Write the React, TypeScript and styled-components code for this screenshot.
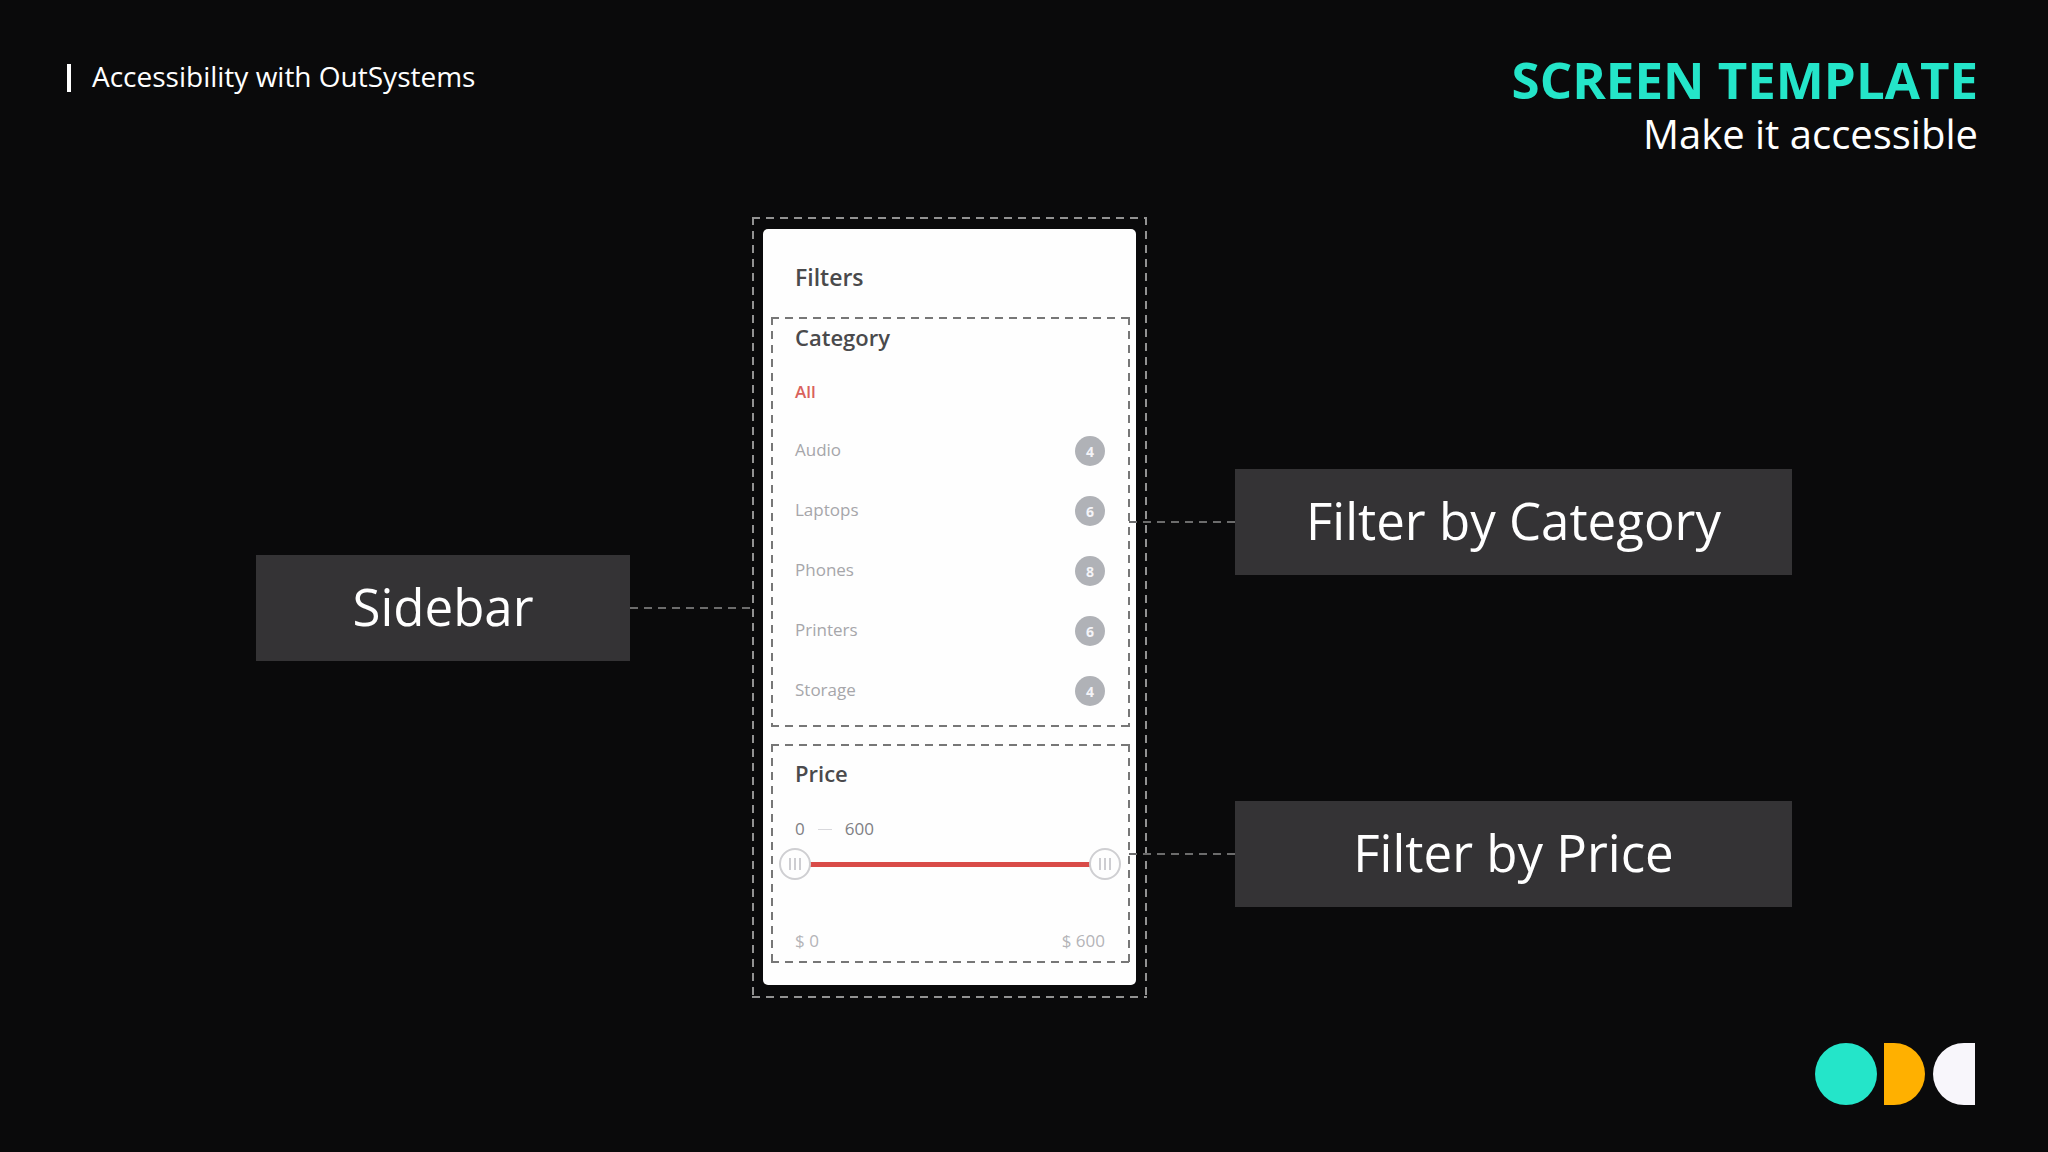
import React, { useState } from "react";
import styled, { createGlobalStyle, css } from "styled-components";

const GlobalStyle = createGlobalStyle`
  *, *::before, *::after { box-sizing: border-box; }
  body {
    margin: 0;
    background: #0a0a0b;
    color: #fff;
    font-family: "Open Sans", "Noto Sans", sans-serif;
  }
  h1, h2, h3, p, ul { margin: 0; padding: 0; }
`;

/* Long dashes along all four edges of a box. */
const dashedOutline = (color: string) => css`
  --dx: repeating-linear-gradient(90deg, ${color} 0 8px, transparent 8px 14px);
  --dy: repeating-linear-gradient(180deg, ${color} 0 8px, transparent 8px 14px);
  background-image: var(--dx), var(--dx), var(--dy), var(--dy);
  background-position: left top, left bottom, left top, right top;
  background-size: 100% 2px, 100% 2px, 2px 100%, 2px 100%;
  background-repeat: no-repeat;
`;

const Slide = styled.div`
  display: flex;
  flex-direction: column;
  min-height: 100vh;
`;

const Header = styled.header`
  display: flex;
  justify-content: space-between;
  align-items: flex-start;
  padding: 51px 70px 0 67px;
`;

const Brand = styled.p`
  display: flex;
  align-items: flex-end;
  gap: 21px;
  padding-top: 9px;
  font-size: 28px;
  line-height: 32px;

  &::before {
    content: "";
    width: 4px;
    height: 28px;
    background: #fff;
  }
`;

const Heading = styled.div`
  text-align: right;
`;

const Title = styled.h1`
  color: #24e5c9;
  font-size: 51px;
  font-weight: 700;
  line-height: 56px;
`;

const Subtitle = styled.p`
  font-size: 40px;
  line-height: 54px;
`;

const Diagram = styled.main`
  display: grid;
  grid-template-columns: 374fr 122fr 395px 88fr 557fr;
  margin-top: 56px;
  padding: 0 12.5%;
`;

const Label = styled.div`
  display: flex;
  align-items: center;
  justify-content: center;
  align-self: center;
  height: 106px;
  padding-bottom: 4px;
  background: #343335;
  font-size: 51px;
  line-height: 72px;
  white-space: nowrap;
`;

const Connector = styled.div<{ $reach?: number }>`
  align-self: center;
  height: 2px;
  margin-left: ${(p) => -(p.$reach ?? 0)}px;
  background: repeating-linear-gradient(90deg, #6c6c6c 0 8px, transparent 8px 14px);
  z-index: 1;
`;

const Callouts = styled.div`
  grid-column: span 2;
  display: grid;
  grid-template-columns: 88fr 557fr;
  grid-template-rows: 410px 219px;
  row-gap: 17px;
  padding-top: 100px;
`;

const Frame = styled.div`
  ${dashedOutline("#929292")}
  padding: 12px 11px 13px;
`;

const Card = styled.aside`
  padding: 0 6px 22px 8px;
  border-radius: 5px;
  background: #fefefe;
  color: #4a4a4c;
`;

const CardTitle = styled.h2`
  padding: 32px 24px 24px;
  font-size: 23px;
  font-weight: 600;
  line-height: 32px;
`;

const Group = styled.section<{ $top: number; $bottom: number }>`
  ${dashedOutline("#777")}
  padding: ${(p) => p.$top}px 25px ${(p) => p.$bottom}px 24px;

  & + & { margin-top: 17px; }
`;

const GroupTitle = styled.h3`
  font-size: 22px;
  font-weight: 600;
  line-height: 32px;
`;

const CategoryList = styled.ul`
  margin-top: 10px;
  list-style: none;
`;

const CategoryLink = styled.a<{ $active?: boolean }>`
  display: flex;
  align-items: center;
  justify-content: space-between;
  height: ${(p) => (p.$active ? 56 : 60)}px;
  color: ${(p) => (p.$active ? "#d9625c" : "#a6a6aa")};
  font-size: 17px;
  font-weight: ${(p) => (p.$active ? 600 : 400)};
  text-decoration: none;
`;

const Badge = styled.span`
  display: grid;
  place-items: center;
  width: 30px;
  height: 30px;
  margin-top: 4px;
  border-radius: 50%;
  background: #b0b2b7;
  color: #f4f4f8;
  font-size: 14px;
  font-weight: 700;
`;

const Values = styled.div`
  display: flex;
  align-items: center;
  gap: 13px;
  margin-top: 28px;
  color: #808084;
  font-size: 17px;
  line-height: 24px;
`;

const ValueDash = styled.span`
  width: 14px;
  height: 1px;
  background: #d8d8dc;
`;

const Range = styled.div`
  position: relative;
  height: 32px;
  margin: 7px -16px 0;

  &::before {
    content: "";
    position: absolute;
    inset: 14px 16px 13px;
    background: #d94b48;
  }
`;

const grip = "linear-gradient(#cdcdd1, #cdcdd1)";

const Slider = styled.input`
  position: absolute;
  inset: 0;
  width: 100%;
  height: 32px;
  margin: 0;
  appearance: none;
  background: none;
  pointer-events: none;

  &::-webkit-slider-thumb {
    appearance: none;
    width: 32px;
    height: 32px;
    border: 2px solid #cfcfd2;
    border-radius: 50%;
    background: ${grip} 8px 8px / 2px 12px no-repeat, ${grip} 13px 8px / 2px 12px no-repeat,
      ${grip} 18px 8px / 2px 12px no-repeat, #fefefe;
    pointer-events: auto;
  }
`;

const Limits = styled.div`
  display: flex;
  justify-content: space-between;
  margin-top: 49px;
  color: #b4b4b8;
  font-size: 17px;
  line-height: 24px;
`;

const Footer = styled.footer`
  display: flex;
  justify-content: flex-end;
  margin-top: auto;
  padding: 0 73px 47px;

  svg { display: block; }
`;

const categories = [
  { name: "Audio", count: 4 },
  { name: "Laptops", count: 6 },
  { name: "Phones", count: 8 },
  { name: "Printers", count: 6 },
  { name: "Storage", count: 4 },
];

const LIMIT = 600;

function PriceFilter() {
  const [low, setLow] = useState(0);
  const [high, setHigh] = useState(LIMIT);

  return (
    <Group $top={13} $bottom={10}>
      <GroupTitle>Price</GroupTitle>
      <Values>
        <span>{low}</span>
        <ValueDash />
        <span>{high}</span>
      </Values>
      <Range>
        <Slider
          type="range"
          aria-label="Minimum price"
          min={0}
          max={LIMIT}
          value={low}
          onChange={(e) => setLow(Math.min(Number(e.target.value), high))}
        />
        <Slider
          type="range"
          aria-label="Maximum price"
          min={0}
          max={LIMIT}
          value={high}
          onChange={(e) => setHigh(Math.max(Number(e.target.value), low))}
        />
      </Range>
      <Limits>
        <span>$ 0</span>
        <span>$ {LIMIT}</span>
      </Limits>
    </Group>
  );
}

export default function App() {
  return (
    <>
      <GlobalStyle />
      <Slide>
        <Header>
          <Brand>Accessibility with OutSystems</Brand>
          <Heading>
            <Title>SCREEN TEMPLATE</Title>
            <Subtitle>Make it accessible</Subtitle>
          </Heading>
        </Header>

        <Diagram>
          <Label>Sidebar</Label>
          <Connector />
          <Frame>
            <Card>
              <CardTitle>Filters</CardTitle>
              <Group $top={4} $bottom={8}>
                <GroupTitle>Category</GroupTitle>
                <CategoryList>
                  <li>
                    <CategoryLink href="#all" $active>All</CategoryLink>
                  </li>
                  {categories.map((c) => (
                    <li key={c.name}>
                      <CategoryLink href={`#${c.name.toLowerCase()}`}>
                        {c.name}
                        <Badge>{c.count}</Badge>
                      </CategoryLink>
                    </li>
                  ))}
                </CategoryList>
              </Group>
              <PriceFilter />
            </Card>
          </Frame>
          <Callouts>
            <Connector $reach={18} />
            <Label>Filter by Category</Label>
            <Connector $reach={18} />
            <Label>Filter by Price</Label>
          </Callouts>
        </Diagram>

        <Footer>
          <svg width="160" height="62" viewBox="0 0 160 62" role="img" aria-label="ODC">
            <circle cx="31" cy="31" r="31" fill="#24e5c9" />
            <path d="M69 0h10a31 31 0 0 1 0 62h-10z" fill="#ffb000" />
            <path d="M160 0h-11a31 31 0 0 0 0 62h11z" fill="#f8f6fb" />
          </svg>
        </Footer>
      </Slide>
    </>
  );
}
